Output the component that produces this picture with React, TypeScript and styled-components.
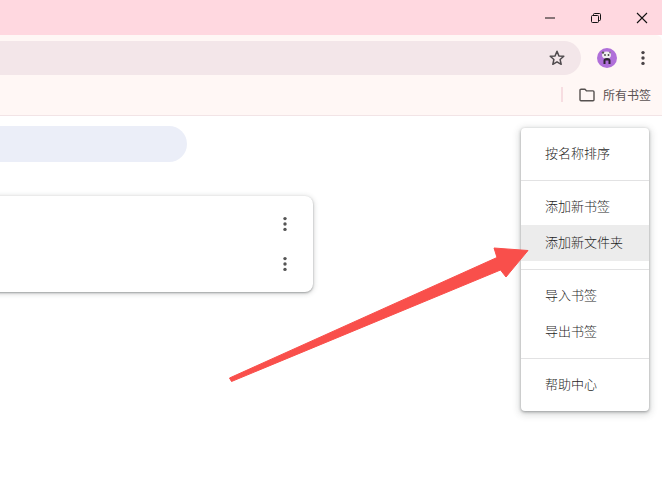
import React from "react";
import styled, { createGlobalStyle } from "styled-components";

const Global = createGlobalStyle`
  html, body { margin: 0; padding: 0; background: #fff; }
  body { font-family: "Noto Sans CJK SC", "Liberation Sans", sans-serif; }
  * { box-sizing: border-box; }
`;

const Page = styled.div`
  position: relative;
  width: 662px;
  height: 496px;
  overflow: hidden;
  background: #fff;
`;

const TitleBar = styled.header`
  height: 35px;
  background: #ffd8e0;
  display: flex;
  justify-content: flex-end;
  align-items: center;
`;

const WindowButton = styled.div`
  width: 46px;
  height: 30px;
  display: flex;
  align-items: center;
  justify-content: center;
  flex: none;
  position: relative;
  left: 3px;
`;

const Toolbar = styled.div`
  height: 46px;
  background: #fff7f5;
  border-top-right-radius: 6px;
  display: flex;
  align-items: center;
  padding-right: 9px;
`;

const Omnibox = styled.div`
  flex: 1;
  height: 34px;
  margin-right: 16px;
  background: #f3e6e9;
  border-radius: 0 17px 17px 0;
  display: flex;
  align-items: center;
  justify-content: flex-end;
  padding-right: 15px;
`;

const Avatar = styled.div`
  width: 20px;
  height: 20px;
  border-radius: 50%;
  background: #b06fd9;
  overflow: hidden;
`;

const ToolButton = styled.div`
  width: 20px;
  height: 20px;
  margin-left: 16px;
  display: flex;
  align-items: center;
  justify-content: center;
`;

const BookmarksBar = styled.div`
  height: 35px;
  background: #fff7f5;
  border-bottom: 1px solid #f2e4e6;
  display: flex;
  align-items: center;
  justify-content: flex-end;
  padding-right: 11px;
  padding-bottom: 7px;
`;

const Separator = styled.div`
  width: 2px;
  height: 15px;
  background: #f7dde1;
  margin-right: 16px;
`;

const FolderLabel = styled.span`
  font-size: 12px;
  line-height: 16px;
  color: #5a5152;
  margin-left: 8px;
`;

const Content = styled.main`
  padding-top: 10px;
`;

const SearchPill = styled.div`
  width: 207px;
  height: 36px;
  margin-left: -20px;
  border-radius: 18px;
  background: #ebeef8;
`;

const Card = styled.section`
  width: 333px;
  margin: 34px 0 0 -20px;
  padding: 8px 0;
  border-radius: 8px;
  background: #fff;
  box-shadow: 0 1px 2px rgba(60, 64, 67, 0.4), 0 1px 5px 1px rgba(60, 64, 67, 0.2);
`;

const CardRow = styled.div`
  height: 40px;
  display: flex;
  align-items: center;
  justify-content: flex-end;
  padding-right: 26px;
`;

const Menu = styled.nav`
  position: absolute;
  left: 521px;
  top: 128px;
  width: 128px;
  padding: 8px 0;
  background: #fff;
  border-radius: 4px;
  box-shadow: 0 1px 3px rgba(60, 64, 67, 0.45), 0 2px 7px 2px rgba(60, 64, 67, 0.18);
`;

const MenuItem = styled.div<{ $active?: boolean }>`
  height: 36px;
  padding-left: 24px;
  padding-bottom: 4px;
  display: flex;
  align-items: center;
  font-size: 13px;
  font-weight: 300;
  color: #1f1f1f;
  white-space: nowrap;
  background: ${(p) => (p.$active ? "#ececec" : "transparent")};
`;

const MenuDivider = styled.div`
  height: 1px;
  margin: 8px 0;
  background: #e2e2e3;
`;

const Annotation = styled.svg`
  position: absolute;
  left: 0;
  top: 0;
  pointer-events: none;
`;

const Dots = ({ color }: { color: string }) => (
  <svg width="4" height="16" viewBox="0 0 4 16">
    <circle cx="2" cy="2.6" r="1.7" fill={color} />
    <circle cx="2" cy="8" r="1.7" fill={color} />
    <circle cx="2" cy="13.4" r="1.7" fill={color} />
  </svg>
);

export default function App() {
  return (
    <Page>
      <Global />
      <TitleBar>
        <WindowButton>
          <svg width="12" height="12" viewBox="0 0 12 12">
            <path d="M1 6h10" stroke="#111" strokeWidth="1" />
          </svg>
        </WindowButton>
        <WindowButton>
          <svg width="12" height="12" viewBox="0 0 12 12" fill="none" stroke="#111" strokeWidth="1">
            <rect x="1.5" y="3.5" width="7" height="7" rx="1" />
            <path d="M3.5 3.5V2.5a1 1 0 0 1 1-1h5a1 1 0 0 1 1 1v5a1 1 0 0 1-1 1h-1" />
          </svg>
        </WindowButton>
        <WindowButton>
          <svg width="12" height="12" viewBox="0 0 12 12">
            <path d="M1 1l10 10M11 1L1 11" stroke="#111" strokeWidth="1.1" />
          </svg>
        </WindowButton>
      </TitleBar>
      <Toolbar>
        <Omnibox>
          <svg width="18" height="18" viewBox="0 0 18 18">
            <path
              d="M9 2.3l1.9 4.6 4.9.4-3.7 3.2 1.1 4.8L9 12.8l-4.2 2.5 1.1-4.8-3.7-3.2 4.9-.4z"
              fill="none"
              stroke="#4f4a4d"
              strokeWidth="1.5"
              strokeLinejoin="round"
            />
          </svg>
        </Omnibox>
        <Avatar>
          <svg width="20" height="20" viewBox="0 0 20 20">
            <ellipse cx="9.5" cy="7" rx="4.5" ry="3.6" fill="#eee" />
            <circle cx="6" cy="4.6" r="1.2" fill="#555" />
            <circle cx="13" cy="4.4" r="1" fill="#888" />
            <circle cx="8" cy="7" r="0.9" fill="#444" />
            <circle cx="11.5" cy="7" r="0.9" fill="#444" />
            <path d="M6.5 16v-3.5q0-2.5 3.5-2.5t3.5 2.5V16h-2v-3.5h-3V16z" fill="#2c2430" />
          </svg>
        </Avatar>
        <ToolButton>
          <Dots color="#4a4447" />
        </ToolButton>
      </Toolbar>
      <BookmarksBar>
        <Separator />
        <svg width="16" height="14" viewBox="0 0 16 14" fill="none">
          <path
            d="M1 2.2a1 1 0 0 1 1-1h4l1.6 1.7H14a1 1 0 0 1 1 1v7.9a1 1 0 0 1-1 1H2a1 1 0 0 1-1-1z"
            stroke="#55504f"
            strokeWidth="1.4"
            strokeLinejoin="round"
          />
        </svg>
        <FolderLabel>所有书签</FolderLabel>
      </BookmarksBar>
      <Content>
        <SearchPill />
        <Card>
          <CardRow>
            <Dots color="#555" />
          </CardRow>
          <CardRow>
            <Dots color="#555" />
          </CardRow>
        </Card>
      </Content>
      <Menu>
        <MenuItem>按名称排序</MenuItem>
        <MenuDivider />
        <MenuItem>添加新书签</MenuItem>
        <MenuItem $active>添加新文件夹</MenuItem>
        <MenuDivider />
        <MenuItem>导入书签</MenuItem>
        <MenuItem>导出书签</MenuItem>
        <MenuDivider />
        <MenuItem>帮助中心</MenuItem>
      </Menu>
      <Annotation width="662" height="496" viewBox="0 0 662 496">
        <path
          d="M229.5 378L497 257.5L494 248L528 250.5L506 277L500.5 270L231.5 381.5Z"
          fill="#f94f4b"
          stroke="#f94f4b"
          strokeWidth="1"
          strokeLinejoin="round"
        />
      </Annotation>
    </Page>
  );
}
